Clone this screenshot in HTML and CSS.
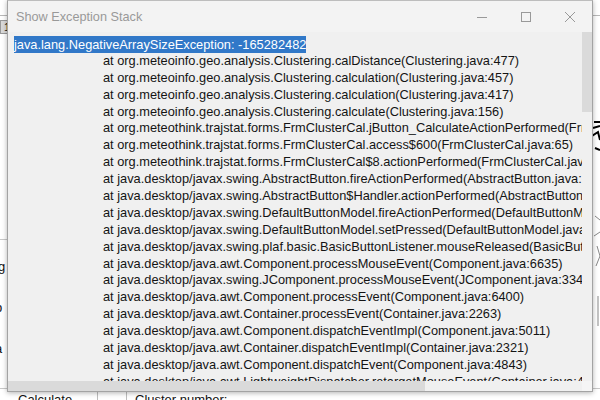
FILE: index.html
```html
<!DOCTYPE html>
<html lang="en">
<head>
  <meta charset="UTF-8" />
  <title>Show Exception Stack</title>
  <link rel="stylesheet" href="styles.css">
</head>
<body>
  <!-- parent app, mostly hidden behind the dialog -->
  <div class="app">
    <div class="app-toolbar"><span class="tool-btn">1</span></div>
    <div class="app-form">
      <div class="app-labels">
        <div class="label">lg</div>
        <div class="label">p</div>
        <div class="label">a</div>
      </div>
      <div class="app-chart">
        <svg width="8" height="260" viewBox="0 0 8 260">
          <path d="M2 26 L8 26 M1 32 L8 30 M0 40 L6 36 L8 44 M3 52 L8 54" stroke="#000" stroke-width="2" fill="none"/>
          <path d="M3 120 L8 124 M2 140 L8 136 M5 150 L8 160 L4 170 M6 200 L6 230" stroke="#888" stroke-width="1" fill="none"/>
        </svg>
      </div>
    </div>
    <div class="app-bottom">
      <span class="cell cell-calc">Calculate</span>
      <span class="cell cell-blank"></span>
      <span class="cell">Cluster number:</span>
    </div>
  </div>

  <div class="dialog">
    <div class="titlebar">
      <span class="title">Show Exception Stack</span>
      <div class="caption">
        <span class="cap-btn">
          <svg width="10" height="10" viewBox="0 0 10 10"><path d="M0 5.5 H10" stroke="#999" stroke-width="1"/></svg>
        </span>
        <span class="cap-btn">
          <svg width="10" height="10" viewBox="0 0 10 10"><rect x="0.5" y="0.5" width="9" height="9" stroke="#999" stroke-width="1" fill="none"/></svg>
        </span>
        <span class="cap-btn">
          <svg width="10" height="10" viewBox="0 0 10 10"><path d="M0 0 L10 10 M10 0 L0 10" stroke="#999" stroke-width="1"/></svg>
        </span>
      </div>
    </div>

    <div class="content">
      <div class="trace">
        <div class="line head"><span class="sel">java.lang.NegativeArraySizeException: -165282482</span></div>
        <div class="line">at org.meteoinfo.geo.analysis.Clustering.calDistance(Clustering.java:477)</div>
        <div class="line">at org.meteoinfo.geo.analysis.Clustering.calculation(Clustering.java:457)</div>
        <div class="line">at org.meteoinfo.geo.analysis.Clustering.calculation(Clustering.java:417)</div>
        <div class="line">at org.meteoinfo.geo.analysis.Clustering.calculate(Clustering.java:156)</div>
        <div class="line">at org.meteothink.trajstat.forms.FrmClusterCal.jButton_CalculateActionPerformed(FrmClusterCal.java:1117)</div>
        <div class="line">at org.meteothink.trajstat.forms.FrmClusterCal.access$600(FrmClusterCal.java:65)</div>
        <div class="line">at org.meteothink.trajstat.forms.FrmClusterCal$8.actionPerformed(FrmClusterCal.java:428)</div>
        <div class="line">at java.desktop/javax.swing.AbstractButton.fireActionPerformed(AbstractButton.java:1967)</div>
        <div class="line">at java.desktop/javax.swing.AbstractButton$Handler.actionPerformed(AbstractButton.java:2308)</div>
        <div class="line">at java.desktop/javax.swing.DefaultButtonModel.fireActionPerformed(DefaultButtonModel.java:405)</div>
        <div class="line">at java.desktop/javax.swing.DefaultButtonModel.setPressed(DefaultButtonModel.java:262)</div>
        <div class="line">at java.desktop/javax.swing.plaf.basic.BasicButtonListener.mouseReleased(BasicButtonListener.java:279)</div>
        <div class="line">at java.desktop/java.awt.Component.processMouseEvent(Component.java:6635)</div>
        <div class="line">at java.desktop/javax.swing.JComponent.processMouseEvent(JComponent.java:3342)</div>
        <div class="line">at java.desktop/java.awt.Component.processEvent(Component.java:6400)</div>
        <div class="line">at java.desktop/java.awt.Container.processEvent(Container.java:2263)</div>
        <div class="line">at java.desktop/java.awt.Component.dispatchEventImpl(Component.java:5011)</div>
        <div class="line">at java.desktop/java.awt.Container.dispatchEventImpl(Container.java:2321)</div>
        <div class="line">at java.desktop/java.awt.Component.dispatchEvent(Component.java:4843)</div>
        <div class="line">at java.desktop/java.awt.LightweightDispatcher.retargetMouseEvent(Container.java:4918)</div>
      </div>
      <div class="vscroll"><div class="thumb"></div></div>
    </div>

    <div class="hscroll">
      <div class="hthumb"></div>
      <div class="corner"></div>
    </div>
  </div>
</body>
</html>
```

FILE: styles.css
```css
body {
  margin: 0;
  padding: 0;
  width: 600px;
  height: 400px;
  overflow: hidden;
  position: relative;
  background: #fff;
  font-family: "Liberation Sans", Arial, sans-serif;
}

/* parent app behind */
.app {
  height: 400px;
  display: flex;
  flex-direction: column;
  color: #111;
  font-size: 13px;
}

.app-toolbar {
  margin-top: 15px;
  border-top: 1px solid #b8b8b8;
  height: 17px;
  padding-top: 3px;
}

.tool-btn {
  display: inline-block;
  background: #d9d9d9;
  border: 1px solid #999;
  height: 12px;
  line-height: 12px;
  padding-left: 3px;
  width: 30px;
  font-size: 11px;
}

.app-form {
  flex: 1;
  display: flex;
  justify-content: space-between;
  margin-top: 60px;
}

.app-labels {
  margin-top: 143px;
  border-top: 1px solid #c8c8c8;
  width: 30px;
  padding-top: 18px;
}

.label {
  height: 41px;
  line-height: 18px;
  margin-left: -5px;
}

.app-chart {
  width: 8px;
}

.app-bottom {
  height: 11px;
  display: flex;
  border-top: 1px solid #c8c8c8;
  line-height: 22px;
  overflow: hidden;
}

.cell {
  display: inline-block;
  height: 30px;
  padding-left: 8px;
}

.cell-calc {
  width: 98px;
  padding-left: 18px;
  border-right: 1px solid #bdbdbd;
  box-sizing: border-box;
}

.cell-blank {
  width: 29px;
  border-right: 1px solid #bdbdbd;
  box-sizing: border-box;
  padding: 0;
}

/* dialog window */
.dialog {
  position: absolute;
  left: 7px;
  top: 0;
  width: 584px;
  height: 390px;
  border: 1px solid #a3a3a3;
  border-top-color: #bdbdbd;
  box-shadow: 0 1px 5px rgba(0, 0, 0, 0.3);
  background: #f0f0f0;
  display: flex;
  flex-direction: column;
}

.titlebar {
  height: 31px;
  background: #f3f3f3;
  display: flex;
  align-items: center;
  justify-content: space-between;
}

.title {
  padding-left: 8px;
  font-size: 12.7px;
  color: #999;
}

.caption {
  display: flex;
  height: 31px;
}

.cap-btn {
  width: 44px;
  display: flex;
  align-items: center;
  justify-content: center;
}

.cap-btn svg {
  display: block;
}

.content {
  flex: 1;
  display: flex;
  min-height: 0;
}

.trace {
  flex: 1;
  overflow: hidden;
  padding: 4px 0 0 6px;
  font-size: 12.8px;
  line-height: 16.9px;
  color: #141414;
  white-space: nowrap;
}

.line {
  padding-left: 89px;
  height: 16.9px;
}

.line.head {
  padding-left: 0;
}

.sel {
  display: inline-block;
  background: #3178c8;
  color: #fff;
  height: 17px;
  line-height: 17px;
}

.vscroll {
  width: 10px;
  background: #f0f0f0;
}

.thumb {
  height: 80px;
  background: #dadada;
}

.hscroll {
  height: 10px;
  display: flex;
  background: #f0f0f0;
}

.hthumb {
  width: 417px;
  background: #dadada;
}

.corner {
  margin-left: auto;
  width: 10px;
  background: #f5f5f5;
}
```
